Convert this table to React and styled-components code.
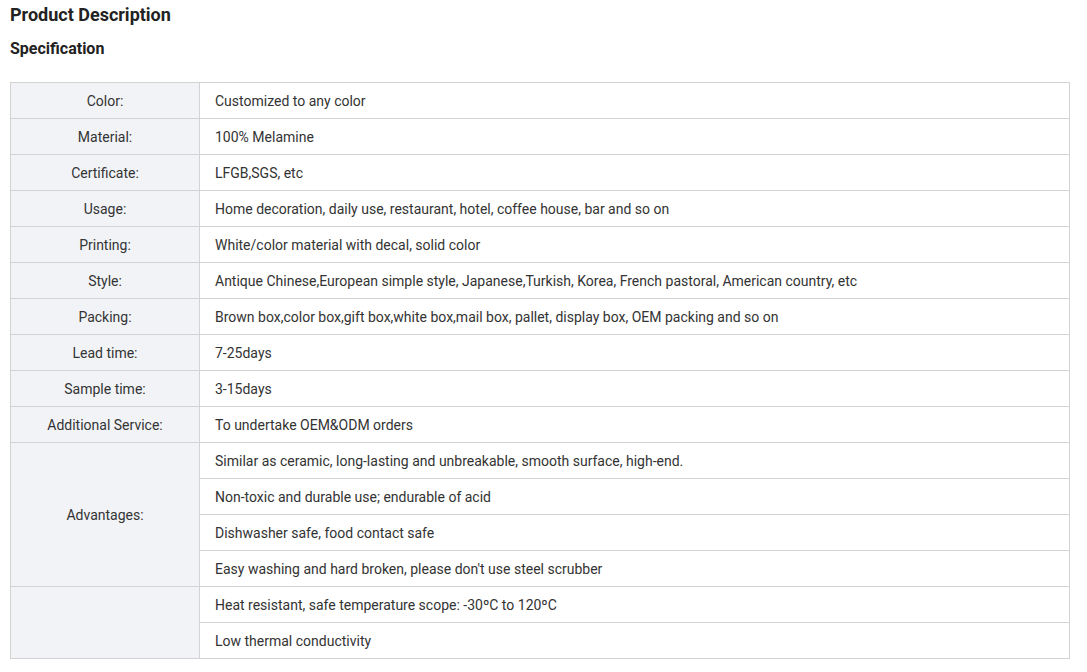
import styled, { createGlobalStyle } from "styled-components";

const GlobalStyle = createGlobalStyle`
  body {
    margin: 0;
    background: #fff;
    font-family: Roboto, "Liberation Sans", Arial, sans-serif;
    color: #333;
  }
`;

const Page = styled.div`
  padding: 4px 10px 0 10px;
`;

const Title = styled.h2`
  margin: 0;
  font-size: 18px;
  line-height: 22px;
  font-weight: 700;
  color: #222;
`;

const SubTitle = styled.h3`
  margin: 13px 0 0;
  font-size: 16px;
  line-height: 20px;
  font-weight: 700;
  color: #222;
`;

const Table = styled.table`
  margin-top: 23px;
  width: 1060px;
  border-collapse: collapse;
  font-size: 14px;
  color: #333;
`;

const Label = styled.td`
  width: 188px;
  background: #f2f3f7;
  border: 1px solid #d3d3d3;
  text-align: center;
  vertical-align: middle;
  padding: 0;
`;

const Value = styled.td`
  height: 35px;
  border: 1px solid #d3d3d3;
  padding: 0 15px;
  vertical-align: middle;
`;

const specs = [
  ["Color:", ["Customized to any color"]],
  ["Material:", ["100% Melamine"]],
  ["Certificate:", ["LFGB,SGS, etc"]],
  ["Usage:", ["Home decoration, daily use, restaurant, hotel, coffee house, bar and so on"]],
  ["Printing:", ["White/color material with decal, solid color"]],
  ["Style:", ["Antique Chinese,European simple style, Japanese,Turkish, Korea, French pastoral, American country, etc"]],
  ["Packing:", ["Brown box,color box,gift box,white box,mail box, pallet, display box, OEM packing and so on"]],
  ["Lead time:", ["7-25days"]],
  ["Sample time:", ["3-15days"]],
  ["Additional Service:", ["To undertake OEM&ODM orders"]],
  ["Advantages:", [
    "Similar as ceramic, long-lasting and unbreakable, smooth surface, high-end.",
    "Non-toxic and durable use; endurable of acid",
    "Dishwasher safe, food contact safe",
    "Easy washing and hard broken, please don't use steel scrubber",
  ]],
  ["", [
    "Heat resistant, safe temperature scope: -30\u00baC to 120\u00baC",
    "Low thermal conductivity",
  ]],
];

export default function App() {
  return (
    <>
      <GlobalStyle />
      <Page>
        <Title>Product Description</Title>
        <SubTitle>Specification</SubTitle>
        <Table>
          <tbody>
            {specs.flatMap(([label, values], i) =>
              values.map((v, j) => (
                <tr key={`${i}-${j}`}>
                  {j === 0 && <Label rowSpan={values.length}>{label}</Label>}
                  <Value>{v}</Value>
                </tr>
              ))
            )}
          </tbody>
        </Table>
      </Page>
    </>
  );
}
